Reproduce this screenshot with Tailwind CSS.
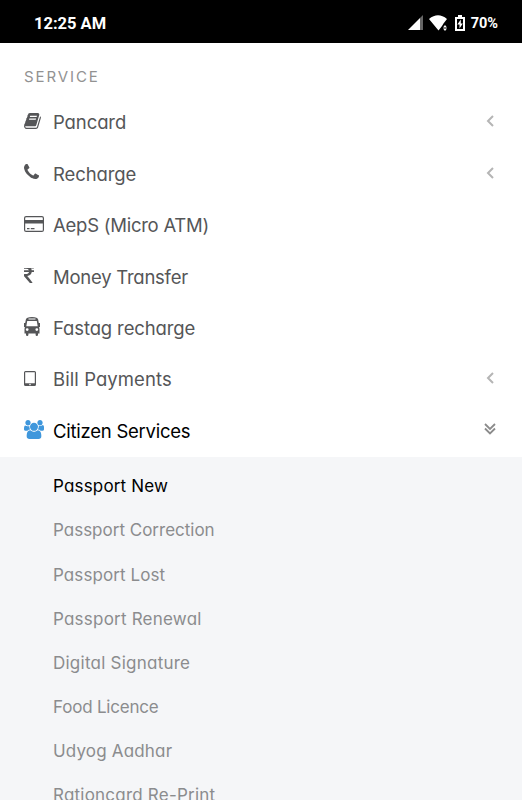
<!doctype html>
<html lang="en">

<head>
	<meta charset="utf-8" />
	<meta name="viewport" content="width=device-width, initial-scale=1" />
	<title>Services</title>
	<script src="https://cdn.jsdelivr.net/npm/@tailwindcss/browser@4"></script>
</head>

<body class="h-[800px] overflow-hidden bg-white font-['Inter',sans-serif] [font-feature-settings:'cv11']">

	<!-- Status bar -->
	<header class="flex h-[43px] items-center justify-between bg-black pt-[4px] pr-6 pl-[34px] font-['Roboto',sans-serif] font-bold text-white">
		<span class="pt-px text-[16.5px]">12:25 AM</span>
		<div class="flex items-center">
			<svg class="relative -top-px mr-[6px] h-[15px] w-[15px]" viewBox="0 0 15 15">
				<path d="M0 15 12 3v12z" fill="#fff" />
				<path d="M12 3 15 0v15h-3z" fill="#666" />
			</svg>
			<svg class="relative -top-px mr-[7px] h-[16px] w-[19px]" viewBox="0 0 19 16" fill="#fff">
				<path d="M0 4Q9-3.500 18 4L14.500 8.500 13 11 9.500 15.500z" />
				<path d="m14 12.500 2-2.500 2 2.500zM14 13.500h4l-2 2.500z" />
			</svg>
			<svg class="relative -top-px mr-[6px] h-[16px] w-[10px]" viewBox="0 0 10 16">
				<path d="M3 0h4v2h3v14H0V2h3z" fill="#fff" />
				<path d="M2 4h6v10H2z" fill="#000" />
				<path d="M5.800 4.500 2.300 9.500h2.200v4l3.300-5H5.800z" fill="#fff" />
			</svg>
			<span class="pt-px text-[14.500px]">70%</span>
		</div>
	</header>

	<nav>
		<h2 class="h-[54.600px] pt-[24px] pl-6 text-[15px] leading-[20px] tracking-[1.900px] text-[#929292]">SERVICE</h2>

		<ul class="text-[18.500px] text-[#555658]">
			<li class="flex h-[51.400px] items-center pr-[28px] pl-6">
				<span class="w-[29px] shrink-0">
					<svg class="relative -top-[2px] h-[16px] w-[17px]" viewBox="60 120 1675 1545" preserveAspectRatio="none" fill="currentColor">
						<path d="M1703 478q40 57 18 129l-275 906q-19 64-76.500 107.500t-122.500 43.500h-923q-77 0-148.500-53.500t-99.500-131.500q-24-67-2-127 0-4 3-27t4-37q1-8-3-21.500t-3-19.500q2-11 8-21t16.500-23.500 16.500-23.500q23-38 45-91.500t30-91.500q3-10 .5-30t-.5-28q3-11 17-28t17-23q21-36 42-92t25-90q1-9-2.500-32t.5-28q4-13 22-30.500t22-22.500q19-26 42.500-84.500t27.500-96.500q1-8-3-25.500t-2-26.500q2-8 9-18t18-23 17-21q8-12 16.500-30.500t15-35 16-36 19.500-32 26.500-23.500 36-11.500 47.500 5.500l-1 3q38-9 51-9h761q74 0 114 56t18 130l-274 906q-36 119-71.500 153.500t-128.500 34.500h-869q-27 0-38 15-11 16-1 43 24 70 144 70h923q29 0 56-15.500t35-41.500l300-987q7-22 5-57 38 15 59 43zm-1064 2q-4 13 2 22.500t20 9.500h608q13 0 25.500-9.500t16.500-22.500l21-64q4-13-2-22.500t-20-9.500h-608q-13 0-25.500 9.500t-16.500 22.500zm-83 256q-4 13 2 22.500t20 9.500h608q13 0 25.500-9.500t16.500-22.500l21-64q4-13-2-22.500t-20-9.500h-608q-13 0-25.500 9.500t-16.500 22.500z" />
					</svg>
				</span>
				<span class="tracking-[-0.1px]">Pancard</span>
				<svg class="relative -top-[2px] ml-auto h-[12px] w-[8px]" viewBox="0 0 8 12" fill="none" stroke="#b5b5b5" stroke-width="2"><path d="M7 1 2 6l5 5" /></svg>
			</li>
			<li class="flex h-[51.400px] items-center pr-[28px] pl-6">
				<span class="w-[29px] shrink-0">
					<svg class="relative -top-[3px] h-[15px] w-[15px]" viewBox="192 128 1408 1408" fill="currentColor">
						<path d="M1600 1240q0 27-10 70.500t-21 68.500q-21 50-122 106-94 51-186 51-27 0-53-3.500t-57.500-12.500-47-14.500-55.500-20.500-49-18q-98-35-175-83-127-79-264-216t-216-264q-48-77-83-175-3-9-18-49t-20.500-55.500-14.500-47-12.500-57.500-3.500-53q0-92 51-186 56-101 106-122 25-11 68.500-21t70.500-10q14 0 21 3 18 6 53 76 11 19 30 54t35 63.500 31 53.500q3 4 17.500 25t21.500 35.500 7 28.500q0 20-28.500 50t-62 55-62 53-28.500 46q0 9 5 22.500t8.500 20.500 14 24 11.500 19q76 137 174 235t235 174q2 1 19 11.500t24 14 20.500 8.500 22.500 5q18 0 46-28.500t53-62 55-62 50-28.500q14 0 28.500 7t35.500 21.500 25 17.500q25 15 53.500 31t63.500 35 54 30q70 35 76 53 3 7 3 21z" />
					</svg>
				</span>
				<span class="tracking-[-0.1px]">Recharge</span>
				<svg class="relative -top-[2px] ml-auto h-[12px] w-[8px]" viewBox="0 0 8 12" fill="none" stroke="#b5b5b5" stroke-width="2"><path d="M7 1 2 6l5 5" /></svg>
			</li>
			<li class="flex h-[51.400px] items-center pr-[28px] pl-6">
				<span class="w-[29px] shrink-0">
					<svg class="relative -top-[2px] h-[16px] w-[20px]" viewBox="0 0 20 16" fill="currentColor">
						<rect x=".6" y=".6" width="18.800" height="14.800" rx="1.500" fill="none" stroke="currentColor" stroke-width="1.200" />
						<path d="M1 4h18v3.500H1zM3 12h2.500v1.300H3zM6.800 12h3.700v1.300H6.800z" />
					</svg>
				</span>
				<span class="tracking-[-0.25px]">AepS (Micro ATM)</span>
			</li>
			<li class="flex h-[51.400px] items-center pr-[28px] pl-6">
				<span class="w-[29px] shrink-0">
					<svg class="relative -top-[2px] h-[15px] w-[10px]" viewBox="447 256 898 1280" preserveAspectRatio="none" fill="currentColor">
						<path d="M1345 470v102q0 14-9 23t-23 9h-168q-23 144-129 234t-276 110q167 178 459 536 14 16 4 34-8 18-29 18h-195q-16 0-25-12-306-367-498-571-9-9-9-22v-127q0-13 9.500-22.500t22.500-9.500h112q132 0 212.500-43t102.500-125h-427q-14 0-23-9t-9-23v-102q0-14 9-23t23-9h413q-57-113-268-113h-145q-13 0-22.500-9.500t-9.500-22.500v-133q0-14 9-23t23-9h832q14 0 23 9t9 23v102q0 14-9 23t-23 9h-233q47 61 64 144h171q14 0 23 9t9 23z" />
					</svg>
				</span>
				<span class="tracking-[-0.25px]">Money Transfer</span>
			</li>
			<li class="flex h-[51.400px] items-center pr-[28px] pl-6">
				<span class="w-[29px] shrink-0">
					<svg class="relative -top-[2px] h-[19px] w-[16px]" viewBox="0 0 16 19" fill="currentColor">
						<path fill-rule="evenodd" d="M8 0c4 0 5.800.8 6.200 2.800L14.800 6H16v4h-.9l.4 2v4.500H14v1.200a1.200 1.200 0 0 1-2.400 0v-1.200H4.400v1.200a1.200 1.200 0 0 1-2.400 0v-1.200H.5V12l.4-2H0V6h1.200l.6-3.200C2.200.8 4 0 8 0zM4.500 1.500v1h7v-1zM3.200 4 2.300 9.300h11.400L12.800 4zM3.200 11.200a1.400 1.400 0 1 0 0 2.800 1.400 1.400 0 0 0 0-2.800zM12.800 11.200a1.400 1.400 0 1 0 0 2.800 1.400 1.400 0 0 0 0-2.800z" />
					</svg>
				</span>
				<span class="tracking-[-0.13px]">Fastag recharge</span>
			</li>
			<li class="flex h-[51.400px] items-center pr-[28px] pl-6">
				<span class="w-[29px] shrink-0">
					<svg class="relative -top-[2px] h-[15px] w-[12px]" viewBox="0 0 12 15" fill="currentColor">
						<path fill-rule="evenodd" d="M1.500 0h9A1.500 1.500 0 0 1 12 1.500v12a1.500 1.500 0 0 1-1.500 1.500h-9A1.500 1.500 0 0 1 0 13.500v-12A1.500 1.500 0 0 1 1.500 0zM1.200 1.200v11h9.600v-11zM6 12.800a.8.8 0 1 0 0 1.600.8.8 0 0 0 0-1.600z" />
					</svg>
				</span>
				<span class="tracking-[0.08px]">Bill Payments</span>
				<svg class="relative -top-[2px] ml-auto h-[12px] w-[8px]" viewBox="0 0 8 12" fill="none" stroke="#b5b5b5" stroke-width="2"><path d="M7 1 2 6l5 5" /></svg>
			</li>
			<li class="flex h-[51.400px] items-center pr-[26px] pl-6 text-black">
				<span class="w-[29px] shrink-0">
					<svg class="relative -top-[2px] h-[19px] w-[20px] text-[#3f97dc]" viewBox="64 0 1920 1792" preserveAspectRatio="none" fill="currentColor">
						<path d="M657 896q-162 5-265 128h-134q-82 0-138-40.500t-56-118.500q0-353 124-353 6 0 43.500 21t97.500 42.500 119 21.500q67 0 133-23-5 37-5 66 0 159 93 290zm1071 637q0 120-73 189.500t-194 69.500h-874q-121 0-194-69.500t-73-189.500q0-53 3.500-103.500t14-109 26.500-108.500 43-97.500 62-81 85.500-53.500 111.500-20q10 0 43 21.500t73 48 107 48 135 21.500 135-21.500 107-48 73-48 43-21.500q61 0 111.500 20t85.500 53.500 62 81 43 97.500 26.500 108.500 14 109 3.500 103.500zm-1024-1277q0 106-75 181t-181 75-181-75-75-181 75-181 181-75 181 75 75 181zm704 384q0 159-112.500 271.500t-271.500 112.500-271.500-112.500-112.500-271.500 112.500-271.500 271.500-112.500 271.500 112.500 112.500 271.500zm576 225q0 78-56 118.500t-138 40.500h-134q-103-123-265-128 93-131 93-290 0-29-5-66 66 23 133 23 59 0 119-21.500t97.500-42.500 43.500-21q124 0 124 353zm-128-609q0 106-75 181t-181 75-181-75-75-181 75-181 181-75 181 75 75 181z" />
					</svg>
				</span>
				<span class="tracking-[-0.25px]">Citizen Services</span>
				<svg class="relative -top-[3px] ml-auto h-[12px] w-[12px]" viewBox="0 0 12 12" fill="none" stroke="#8b8b8b" stroke-width="1.800"><path d="m1 1 5 5 5-5M1 5.500l5 5 5-5" /></svg>
			</li>
		</ul>

		<!-- Citizen Services submenu -->
		<ul class="h-[344px] bg-[#f5f6f8] pt-[7.500px] pl-[53px] text-[17px] text-[#8b8c8e]">
			<li class="flex h-[44.200px] items-center tracking-[0.17px] text-black">Passport New</li>
			<li class="flex h-[44.200px] items-center">Passport Correction</li>
			<li class="flex h-[44.200px] items-center tracking-[0.08px]">Passport Lost</li>
			<li class="flex h-[44.200px] items-center tracking-[0.22px]">Passport Renewal</li>
			<li class="flex h-[44.200px] items-center tracking-[0.24px]">Digital Signature</li>
			<li class="flex h-[44.200px] items-center tracking-[-0.2px]">Food Licence</li>
			<li class="flex h-[44.200px] items-center tracking-[0.17px]">Udyog Aadhar</li>
			<li class="flex h-[44.200px] items-center tracking-[0.22px]">Rationcard Re-Print</li>
		</ul>
	</nav>

</body>

</html>
